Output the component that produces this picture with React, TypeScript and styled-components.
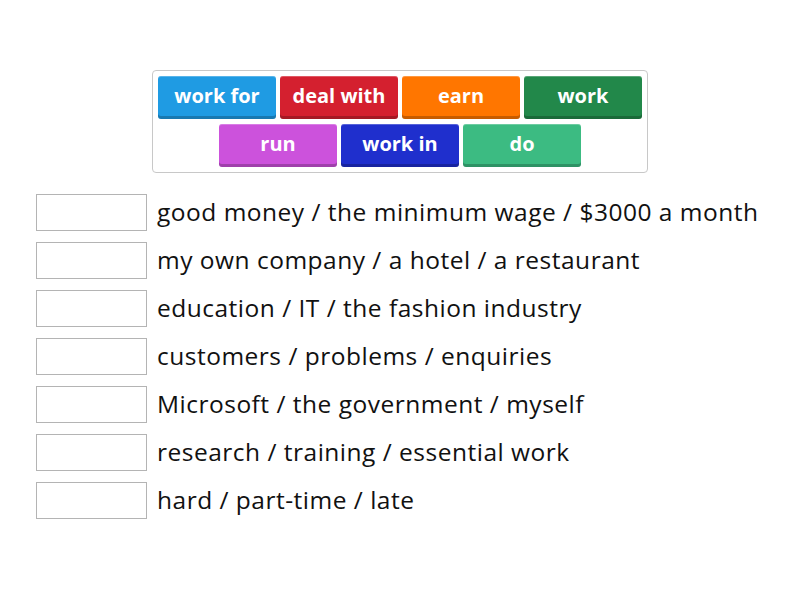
import React from "react";
import styled, { createGlobalStyle } from "styled-components";

const Global = createGlobalStyle`
  html, body { margin: 0; padding: 0; background: #fff; }
  body { font-family: "Open Sans", "Noto Sans", sans-serif; }
`;

const Page = styled.div`
  width: 800px;
  height: 600px;
  padding-top: 70px;
  box-sizing: border-box;
`;

const Bank = styled.div`
  width: 496px;
  margin: 0 auto;
  box-sizing: border-box;
  border: 1px solid #c8c8c8;
  border-radius: 4px;
  padding: 5px 4px 5px 4px;
  display: flex;
  flex-wrap: wrap;
  justify-content: center;
  gap: 5px 4px;
`;

const Tile = styled.div<{ $bg: string }>`
  width: 118px;
  height: 43px;
  box-sizing: border-box;
  background: ${(p) => p.$bg};
  border-radius: 3px;
  box-shadow: inset 0 -3px 0 rgba(0, 0, 0, 0.22), inset 0 1px 0 rgba(255, 255, 255, 0.25);
  color: #fff;
  font-family: "Open Sans", "Noto Sans", sans-serif;
  font-weight: 700;
  font-size: 20px;
  display: flex;
  align-items: center;
  justify-content: center;
  padding-bottom: 5px;
`;

const List = styled.div`
  margin-top: 21px;
  padding-left: 36px;
  display: flex;
  flex-direction: column;
  gap: 12px;
`;

const Row = styled.div`
  display: flex;
  align-items: center;
  gap: 10px;
  height: 36px;
`;

const Slot = styled.div`
  width: 111px;
  height: 37px;
  box-sizing: border-box;
  border: 1px solid #b4b4b4;
  background: #fff;
  flex: none;
`;

const Phrase = styled.div`
  font-family: "Open Sans", "Noto Sans", sans-serif;
  font-size: 24.5px;
  letter-spacing: 0.5px;
  color: #111;
  white-space: nowrap;
  padding-bottom: 2px;
`;

const tiles = [
  { t: "work for", c: "#1f9be3" },
  { t: "deal with", c: "#d4202f" },
  { t: "earn", c: "#ff7600" },
  { t: "work", c: "#22884a" },
  { t: "run", c: "#cc52dc" },
  { t: "work in", c: "#1f2fcd" },
  { t: "do", c: "#3cbb82" },
];

const phrases = [
  "good money / the minimum wage / $3000 a month",
  "my own company / a hotel / a restaurant",
  "education / IT / the fashion industry",
  "customers / problems / enquiries",
  "Microsoft / the government / myself",
  "research / training / essential work",
  "hard / part-time / late",
];

export default function App() {
  return (
    <Page>
      <Global />
      <Bank>
        {tiles.map((x) => (
          <Tile key={x.t} $bg={x.c}>
            {x.t}
          </Tile>
        ))}
      </Bank>
      <List>
        {phrases.map((p) => (
          <Row key={p}>
            <Slot />
            <Phrase>{p}</Phrase>
          </Row>
        ))}
      </List>
    </Page>
  );
}
